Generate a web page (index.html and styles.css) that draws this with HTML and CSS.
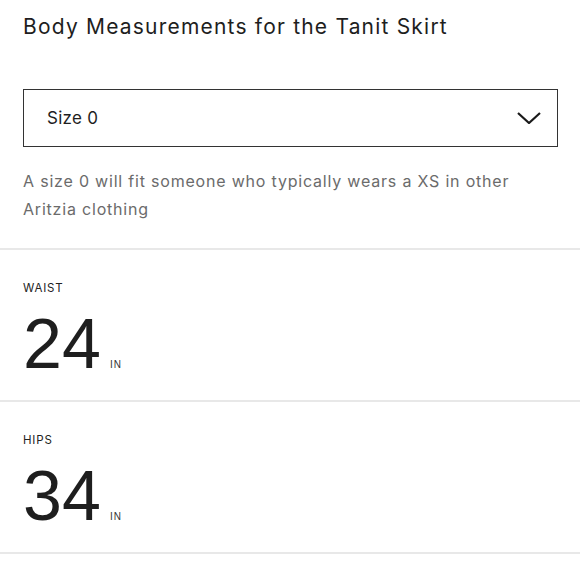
FILE: index.html
```html
<!DOCTYPE html>
<html lang="en">
<head>
<meta charset="utf-8">
<link rel="stylesheet" href="styles.css">
</head>
<body>
<div class="page">
  <div class="intro">
    <h1 class="title">Body Measurements for the Tanit Skirt</h1>
    <div class="select">
      <span class="select-value">Size 0</span>
      <svg class="chevron" width="24" height="12" viewBox="0 0 24 12"><path d="M1 1 L12 11 L23 1" fill="none" stroke="#1a1a1a" stroke-width="2.2"/></svg>
    </div>
    <p class="desc">A size 0 will fit someone who typically wears a XS in other Aritzia clothing</p>
  </div>
  <div class="row">
    <div class="label">WAIST</div>
    <div class="value"><span class="num">24</span><span class="unit">IN</span></div>
  </div>
  <div class="row">
    <div class="label">HIPS</div>
    <div class="value"><span class="num">34</span><span class="unit">IN</span></div>
  </div>
</div>
</body>
</html>
```
FILE: styles.css
```css
html, body { margin: 0; padding: 0; background: #fff; }
body { font-family: "Inter", "Liberation Sans", sans-serif; color: #222; }
.page { width: 580px; }
.intro { padding: 12px 22px 0 23px; border-bottom: 2px solid #e8e8e8; height: 250px; box-sizing: border-box; }
.title { margin: 0; font-size: 21px; font-weight: 400; line-height: 30px; letter-spacing: 1.2px; color: #1e1e1e; }
.select { margin-top: 47px; height: 58px; box-sizing: border-box; border: 1.5px solid #333; display: flex; align-items: center; justify-content: space-between; padding: 0 16px 0 23px; }
.select-value { font-size: 17px; letter-spacing: 0.3px; color: #1e1e1e; }
.desc { margin: 20px 0 0; font-size: 16px; line-height: 28px; letter-spacing: 0.8px; color: #6b6b6b; }
.row { height: 152px; box-sizing: border-box; border-bottom: 2px solid #e8e8e8; padding: 31px 23px 0; }
.label { font-size: 11.5px; letter-spacing: 0.8px; line-height: 14px; color: #222; }
.value { margin-top: 14px; display: flex; align-items: baseline; }
.num { font-family: "Liberation Sans", sans-serif; font-size: 70px; line-height: 70px; color: #1e1e1e; }
.unit { font-family: "Liberation Sans", sans-serif; font-size: 10px; margin-left: 9px; letter-spacing: 1px; color: #333; }
```
